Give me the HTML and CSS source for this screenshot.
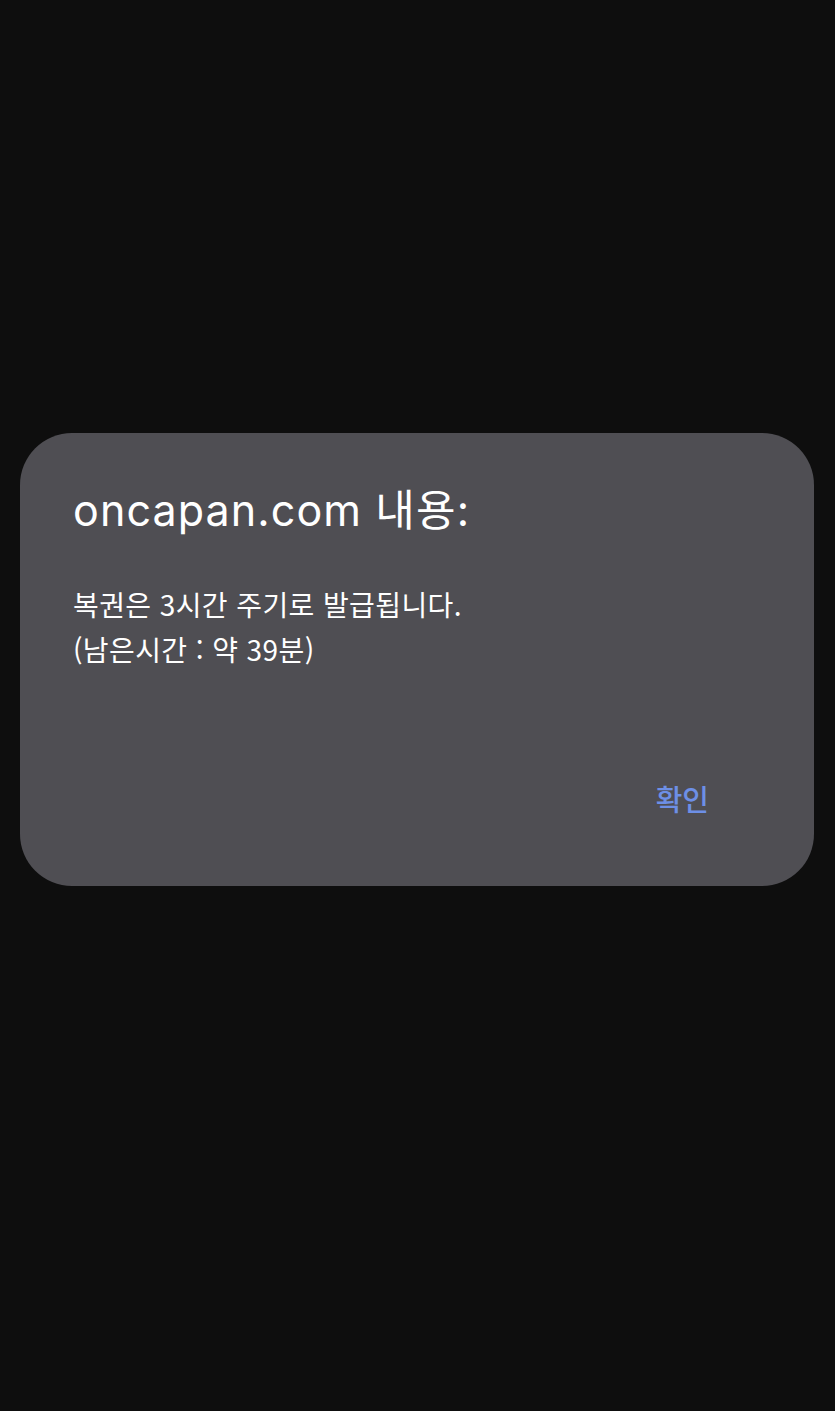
FILE: index.html
```html
<!DOCTYPE html>
<html lang="ko">
<head>
<meta charset="utf-8">
<link rel="stylesheet" href="styles.css">
</head>
<body>
<div class="screen">
  <div class="dialog">
    <h1 class="title">oncapan.com 내용:</h1>
    <p class="message">복권은 3시간 주기로 발급됩니다.<br>(남은시간 : 약 39분)</p>
    <div class="actions">
      <span class="btn">확인</span>
    </div>
  </div>
</div>
</body>
</html>
```
FILE: styles.css
```css
html, body {
  margin: 0;
  padding: 0;
  background: #0e0e0e;
}
.screen {
  width: 835px;
  height: 1411px;
  padding-top: 433px;
  box-sizing: border-box;
  padding-left: 20px;
}
.dialog {
  width: 794px;
  height: 453px;
  box-sizing: border-box;
  background: #4f4e53;
  border-radius: 52px;
  padding: 51px 53px 0 53px;
  display: flex;
  flex-direction: column;
}
.title {
  margin: 0;
  font-family: "Inter", "Noto Sans CJK KR", sans-serif;
  font-weight: 400;
  font-size: 43px;
  line-height: 52px;
  color: #ffffff;
  letter-spacing: 1.1px;
}
.message {
  margin: 46px 0 0 0;
  font-family: "Noto Sans CJK KR", sans-serif;
  font-size: 28px;
  line-height: 45px;
  color: #ffffff;
  letter-spacing: 0.4px;
}
.actions {
  display: flex;
  justify-content: flex-end;
  margin-top: 108px;
  padding-right: 52px;
}
.btn {
  font-family: "Noto Sans CJK KR", sans-serif;
  font-size: 29px;
  font-weight: 500;
  color: #6d8fe6;
  line-height: 36px;
}
```
